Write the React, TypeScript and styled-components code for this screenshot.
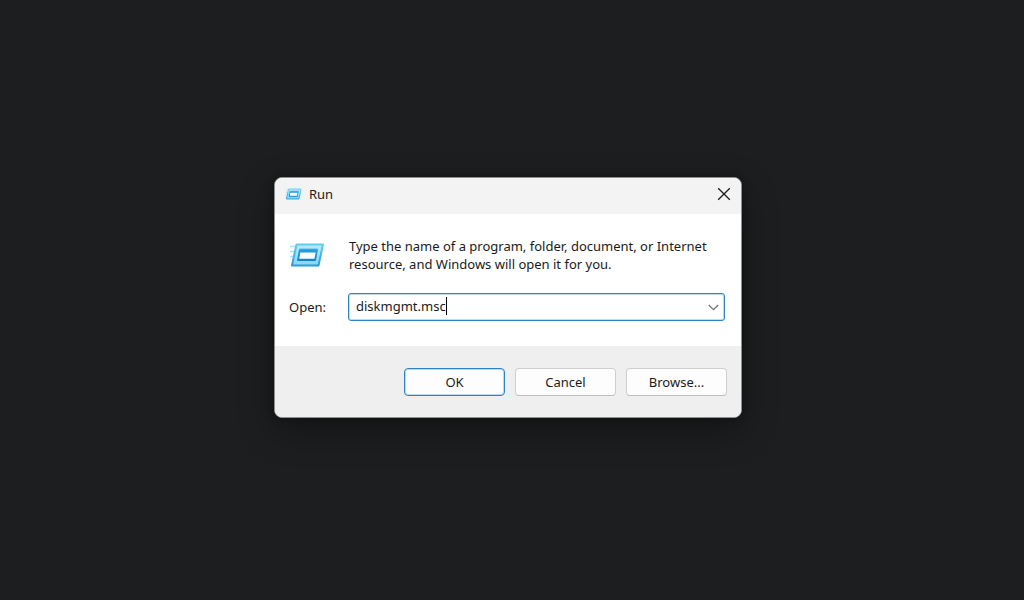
import React, { useState } from "react";
import styled, { createGlobalStyle } from "styled-components";

const GlobalStyle = createGlobalStyle`
  * { box-sizing: border-box; }
  body {
    margin: 0;
    background: #1c1e1f;
    color: #1b1b1b;
    font: 13px/18px "Noto Sans", "Segoe UI", sans-serif;
  }
`;

const Desktop = styled.main`
  display: flex;
  align-items: center;
  justify-content: center;
  min-height: 100vh;
  padding: 0 8px 5px 0;
`;

const Dialog = styled.form`
  width: 468px;
  max-width: 100%;
  overflow: hidden;
  border: 1px solid #8d8f90;
  border-radius: 8px;
  background: #fff;
  box-shadow: 0 12px 36px rgba(0, 0, 0, 0.32), 0 0 8px rgba(0, 0, 0, 0.3);
`;

const TitleBar = styled.header`
  display: flex;
  align-items: center;
  gap: 7px;
  height: 36px;
  padding: 0 10px 4px 10px;
  background: #f3f3f3;
`;

const Title = styled.h1`
  flex: 1;
  margin: 0;
  font: inherit;
`;

const CloseButton = styled.button`
  display: flex;
  padding: 0;
  border: 0;
  background: none;
  color: #1b1b1b;
`;

const Body = styled.div`
  display: grid;
  grid-template-columns: 60px 1fr;
  align-items: center;
  row-gap: 20px;
  padding: 23px 16px 25px 14px;
`;

const Message = styled.p`
  margin: 0;
`;

const Label = styled.label`
  white-space: nowrap;
`;

const ComboBox = styled.div`
  display: flex;
  align-items: center;
  height: 28px;
  margin-left: -1px;
  padding: 0 4px 2px 7px;
  border: 1px solid #2f83c0;
  border-radius: 3px;
  outline: 1px solid rgba(47, 131, 192, 0.3);
  outline-offset: -2px;
  background: #fff;
`;

const Field = styled.input`
  field-sizing: content;
  min-width: 0;
  padding: 0;
  border: 0;
  outline: 0;
  background: none;
  color: inherit;
  font: inherit;
`;

const Caret = styled.span`
  width: 1px;
  height: 18px;
  background: #000;
`;

const DropButton = styled.button`
  display: flex;
  margin-left: auto;
  padding: 2px 0 0;
  border: 0;
  background: none;
  color: #777;
`;

const Footer = styled.footer`
  display: flex;
  justify-content: flex-end;
  gap: 10px;
  padding: 22px 14px 21px;
  background: #efefef;
`;

const Button = styled.button<{ $primary?: boolean }>`
  width: 101px;
  height: 28px;
  padding: 0;
  border: 1px solid ${(p) => (p.$primary ? "#2b83c4" : "#cfcfcf")};
  border-bottom-color: ${(p) => (p.$primary ? "#2b83c4" : "#bdbdbd")};
  border-radius: 4px;
  outline: ${(p) => (p.$primary ? "1px solid rgba(43, 131, 196, 0.3)" : "none")};
  outline-offset: -2px;
  background: #fdfdfd;
  color: inherit;
  font: inherit;
`;

function RunIcon({ width, height }: { width: number; height: number }) {
  return (
    <svg width={width} height={height} viewBox="0 0 36 24" aria-hidden="true">
      <defs>
        <linearGradient id="frame" x1="0" y1="0" x2="0" y2="1">
          <stop offset="0" stopColor="#b4edfd" />
          <stop offset="1" stopColor="#84d6f7" />
        </linearGradient>
        <linearGradient id="edge" x1="0" y1="0" x2="0" y2="1">
          <stop offset="0" stopColor="#62cdf3" />
          <stop offset="1" stopColor="#2a9cd9" />
        </linearGradient>
        <linearGradient id="window" x1="0" y1="0" x2="0" y2="1">
          <stop offset="0" stopColor="#2d9fdc" />
          <stop offset="1" stopColor="#1583c9" />
        </linearGradient>
      </defs>
      <path d="M1 3.5h7M1 8.5h6M1 13.5h5" stroke="#a5e2f8" strokeWidth="1.4" />
      <path d="M7.5 1.5H34L29.500 22.5H3z" fill="url(#frame)" stroke="url(#edge)" strokeWidth="2" strokeLinejoin="round" />
      <path d="M10.500 6.200H28.500L26.500 17.500H8.500z" fill="url(#window)" stroke="url(#window)" strokeWidth="1" strokeLinejoin="round" />
      <path d="M11.400 9.500H26.600L25.500 15.800H10.200z" fill="#fafdff" />
    </svg>
  );
}

export default function App() {
  const [command, setCommand] = useState("diskmgmt.msc");
  return (
    <>
      <GlobalStyle />
      <Desktop>
        <Dialog onSubmit={(e) => e.preventDefault()}>
          <TitleBar>
            <RunIcon width={17} height={12} />
            <Title>Run</Title>
            <CloseButton type="button" aria-label="Close">
              <svg width="14" height="14" viewBox="0 0 14 14" fill="none" stroke="currentColor" strokeWidth="1.3">
                <path d="M1.200 1.200l11.600 11.600M12.800 1.200L1.200 12.800" />
              </svg>
            </CloseButton>
          </TitleBar>
          <Body>
            <RunIcon width={36} height={24} />
            <Message>
              Type the name of a program, folder, document, or Internet resource, and Windows will open it for you.
            </Message>
            <Label htmlFor="command">Open:</Label>
            <ComboBox>
              <Field id="command" value={command} spellCheck={false} onChange={(e) => setCommand(e.target.value)} />
              <Caret />
              <DropButton type="button" aria-label="Show recent commands">
                <svg width="13" height="9" viewBox="0 0 13 9" fill="none" stroke="currentColor" strokeWidth="1.3">
                  <path d="M1.800 2l4.700 4.700L11.200 2" />
                </svg>
              </DropButton>
            </ComboBox>
          </Body>
          <Footer>
            <Button type="submit" $primary>OK</Button>
            <Button type="button">Cancel</Button>
            <Button type="button">Browse...</Button>
          </Footer>
        </Dialog>
      </Desktop>
    </>
  );
}
